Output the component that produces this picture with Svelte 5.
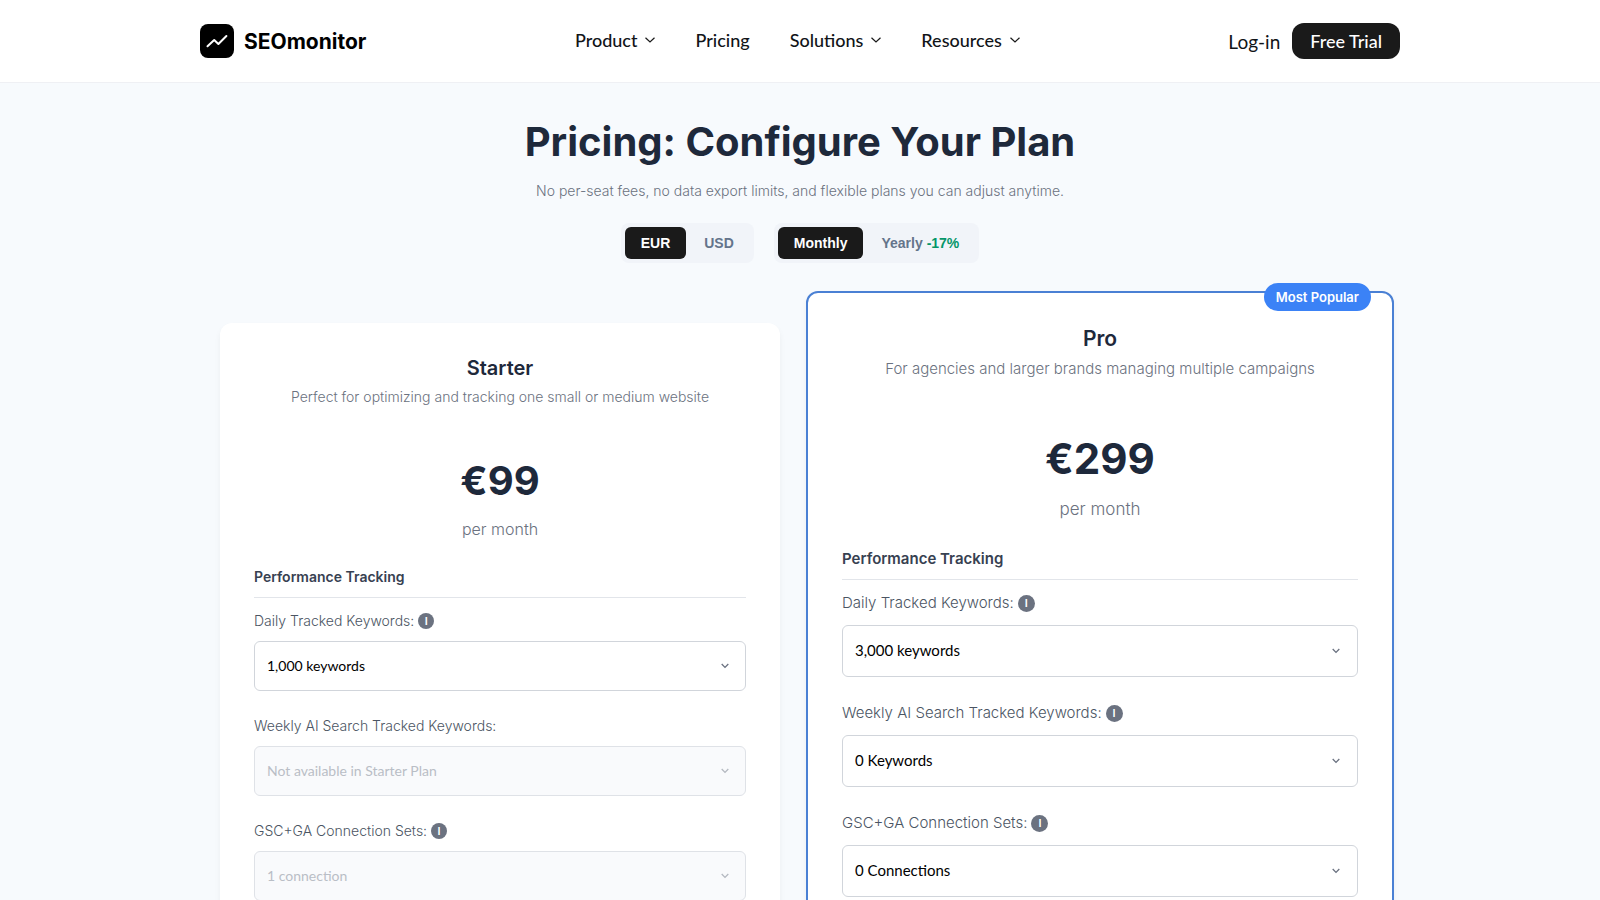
<script>
  const navItems = [
    { label: 'Product', menu: true },
    { label: 'Pricing', menu: false },
    { label: 'Solutions', menu: true },
    { label: 'Resources', menu: true }
  ];

  const plans = [
    {
      id: 'starter',
      name: 'Starter',
      description: 'Perfect for optimizing and tracking one small or medium website',
      price: { EUR: '€99', USD: '$99' },
      popular: false,
      fields: [
        { label: 'Daily Tracked Keywords:', value: '1,000 keywords', info: true, disabled: false },
        { label: 'Weekly AI Search Tracked Keywords:', value: 'Not available in Starter Plan', info: false, disabled: true },
        { label: 'GSC+GA Connection Sets:', value: '1 connection', info: true, disabled: true }
      ]
    },
    {
      id: 'pro',
      name: 'Pro',
      description: 'For agencies and larger brands managing multiple campaigns',
      price: { EUR: '€299', USD: '$299' },
      popular: true,
      fields: [
        { label: 'Daily Tracked Keywords:', value: '3,000 keywords', info: true, disabled: false },
        { label: 'Weekly AI Search Tracked Keywords:', value: '0 Keywords', info: true, disabled: false },
        { label: 'GSC+GA Connection Sets:', value: '0 Connections', info: true, disabled: false }
      ]
    }
  ];

  let currency = $state('EUR');
  let period = $state('Monthly');
</script>

<header class="header">
  <div class="bar">
    <a class="logo" href="#home">
      <svg width="34" height="34" viewBox="0 0 34 34" aria-hidden="true">
        <rect width="34" height="34" rx="8" fill="#000" />
        <path d="M7.5 22.3 L14.2 16 L18.4 20 L26.4 12" fill="none" stroke="#fff" stroke-width="2" stroke-linecap="round" stroke-linejoin="round" />
      </svg>
      <span>SEOmonitor</span>
    </a>
    <nav class="nav">
      {#each navItems as item}
        <a href="#{item.label.toLowerCase()}">
          {item.label}
          {#if item.menu}
            <svg width="10" height="6" viewBox="0 0 10 6" aria-hidden="true">
              <path d="M0.5 0.7 L5 5 L9.5 0.7" fill="none" stroke="#1a1a1a" stroke-width="1.2" />
            </svg>
          {/if}
        </a>
      {/each}
    </nav>
    <div class="actions">
      <a class="login" href="#login">Log-in</a>
      <a class="trial" href="#trial">Free Trial</a>
    </div>
  </div>
</header>

<main class="page">
  <h1>Pricing: Configure Your Plan</h1>
  <p class="lead">No per-seat fees, no data export limits, and flexible plans you can adjust anytime.</p>

  <div class="toggles">
    <div class="toggle">
      <button class:active={currency === 'EUR'} onclick={() => (currency = 'EUR')}>EUR</button>
      <button class:active={currency === 'USD'} onclick={() => (currency = 'USD')}>USD</button>
    </div>
    <div class="toggle">
      <button class:active={period === 'Monthly'} onclick={() => (period = 'Monthly')}>Monthly</button>
      <button class:active={period === 'Yearly'} onclick={() => (period = 'Yearly')}>Yearly <span class="save">-17%</span></button>
    </div>
  </div>

  <div class="plans">
    {#each plans as plan}
      <section class="card" class:pro={plan.popular}>
        {#if plan.popular}
          <span class="badge">Most Popular</span>
        {/if}
        <h2>{plan.name}</h2>
        <p class="description">{plan.description}</p>
        <p class="price">{plan.price[currency]}</p>
        <p class="period">per month</p>
        <h3>Performance Tracking</h3>
        {#each plan.fields as field, i}
          <div class="field">
            <div class="caption">
              <label for="{plan.id}-{i}">{field.label}</label>
              {#if field.info}<span class="info">I</span>{/if}
            </div>
            <div class="control" class:disabled={field.disabled}>
              <select id="{plan.id}-{i}" disabled={field.disabled}>
                <option>{field.value}</option>
              </select>
              <svg width="8" height="6" viewBox="0 0 8 6" aria-hidden="true">
                <path d="M0.7 1 L4 4.4 L7.3 1" fill="none" stroke="currentColor" stroke-width="1.3" />
              </svg>
            </div>
          </div>
        {/each}
      </section>
    {/each}
  </div>
</main>

<style>
  :global(body) {
    background: #f7fafd;
    color: #1e293b;
    font-family: Inter, 'Liberation Sans', sans-serif;
  }

  :global(html) {
    scrollbar-width: none;
  }

  .header {
    background: #fff;
    border-bottom: 1px solid #eff0f4;
  }

  .bar {
    display: flex;
    align-items: center;
    justify-content: space-between;
    max-width: 1200px;
    height: 82px;
    margin: 0 auto;
  }

  a {
    color: #111418;
    text-decoration: none;
  }

  .logo {
    display: flex;
    align-items: center;
    gap: 10px;
    color: #000;
    font-size: 21px;
    font-weight: 700;
  }

  .nav {
    display: flex;
    gap: 40px;
    padding-bottom: 2px;
    font-family: Lato, sans-serif;
    font-size: 18px;
    font-weight: 500;
  }

  .nav a {
    display: flex;
    align-items: center;
    gap: 8px;
  }

  .actions {
    display: flex;
    align-items: center;
    gap: 12px;
    font-family: Lato, sans-serif;
    font-size: 18px;
  }

  .login {
    font-size: 19px;
  }

  .trial {
    padding: 0 18px;
    border-radius: 12px;
    background: #1a1a1a;
    color: #fff;
    font-weight: 500;
    line-height: 36px;
  }

  .page {
    padding: 35px 20px 60px;
  }

  h1,
  h2,
  h3,
  p {
    margin: 0;
    text-align: center;
  }

  h1 {
    font-size: 40px;
    font-weight: 700;
    line-height: 48px;
  }

  .lead {
    margin-top: 13px;
    color: #6b7280;
    font-size: 14px;
    font-weight: 300;
    line-height: 24px;
  }

  .toggles {
    display: flex;
    justify-content: center;
    gap: 20px;
    margin-top: 20px;
  }

  .toggle {
    display: flex;
    gap: 2px;
    padding: 4px;
    border-radius: 8px;
    background: #f1f4f9;
  }

  .toggle button {
    height: 32px;
    padding: 0 16px;
    border: 0;
    border-radius: 6px;
    background: none;
    color: #64748b;
    font-family: 'Liberation Sans', sans-serif;
    font-size: 14px;
    font-weight: 600;
  }

  .toggle button.active {
    background: #1a1a1a;
    color: #fff;
  }

  .toggle .save {
    color: #059669;
  }

  .plans {
    display: grid;
    grid-template-columns: 1fr 1fr;
    align-items: start;
    gap: 40px;
    max-width: 1160px;
    margin: 28px auto 0;
  }

  .card {
    margin-top: 32px;
    padding: 32px 34px;
    border-radius: 12px;
    background: #fff;
    box-shadow: 0 4px 6px rgba(0, 0, 0, 0.05);
  }

  h2 {
    color: #1e293b;
    font-size: 20px;
    font-weight: 600;
    line-height: 26px;
  }

  .description {
    margin-top: 4px;
    color: #6b7280;
    font-size: 14px;
    font-weight: 300;
    line-height: 24px;
  }

  .price {
    margin-top: 48px;
    font-size: 40px;
    font-weight: 700;
    line-height: 48px;
  }

  .period {
    margin-top: 12px;
    color: #6b7280;
    font-size: 16px;
    font-weight: 300;
    line-height: 24px;
  }

  h3 {
    margin-top: 24px;
    padding-bottom: 8px;
    border-bottom: 1px solid #e2e5ea;
    color: #374151;
    font-size: 14px;
    font-weight: 600;
    line-height: 24px;
    text-align: left;
  }

  .field {
    margin-top: 23px;
  }

  h3 + .field {
    margin-top: 11px;
  }

  .caption {
    display: flex;
    align-items: center;
    gap: 4px;
    margin-bottom: 8px;
    color: #4b5563;
    font-size: 14px;
    font-weight: 300;
    line-height: 24px;
  }

  .info {
    width: 16px;
    border-radius: 50%;
    background: #6b7280;
    color: #fff;
    font-size: 11px;
    font-weight: 600;
    line-height: 16px;
    text-align: center;
  }

  .control {
    display: grid;
    align-items: center;
    color: #6b7280;
  }

  .control > * {
    grid-area: 1 / 1;
  }

  .control svg {
    justify-self: end;
    margin-right: 17px;
    pointer-events: none;
  }

  select {
    width: 100%;
    height: 50px;
    padding: 0 12px 2px;
    border: 1px solid #d1d5db;
    border-radius: 6px;
    background: #fff;
    color: #000;
    font-family: Lato, sans-serif;
    font-size: 14px;
    appearance: none;
  }

  .control.disabled {
    color: #b4b9c1;
  }

  select:disabled {
    border-color: #dfe2e7;
    background: #f9fafc;
    color: #b9bec6;
    opacity: 1;
  }

  .pro {
    position: relative;
    margin: 0 -14px;
    padding: 33px 34px;
    border: 2px solid #4a80d4;
  }

  .badge {
    position: absolute;
    top: -10px;
    right: 21px;
    padding: 0 12px;
    border-radius: 14px;
    background: #3b82f6;
    color: #fff;
    font-size: 13px;
    font-weight: 600;
    line-height: 28px;
  }

  .pro h2 {
    font-size: 21px;
  }

  .pro .description,
  .pro h3,
  .pro .caption,
  .pro select {
    font-size: 15px;
  }

  .pro .price {
    margin-top: 54px;
    font-size: 42px;
  }

  .pro .description {
    margin-top: 5px;
  }

  .pro .period {
    margin-top: 14px;
    font-size: 17px;
  }

  .pro h3 {
    margin-top: 26px;
  }

  .pro .caption {
    margin-bottom: 10px;
  }

  .pro .info {
    width: 17px;
    line-height: 17px;
  }

  .pro select {
    height: 52px;
  }

  .pro .control svg {
    margin-right: 18px;
  }

  .pro .field + .field {
    margin-top: 24px;
  }
</style>
